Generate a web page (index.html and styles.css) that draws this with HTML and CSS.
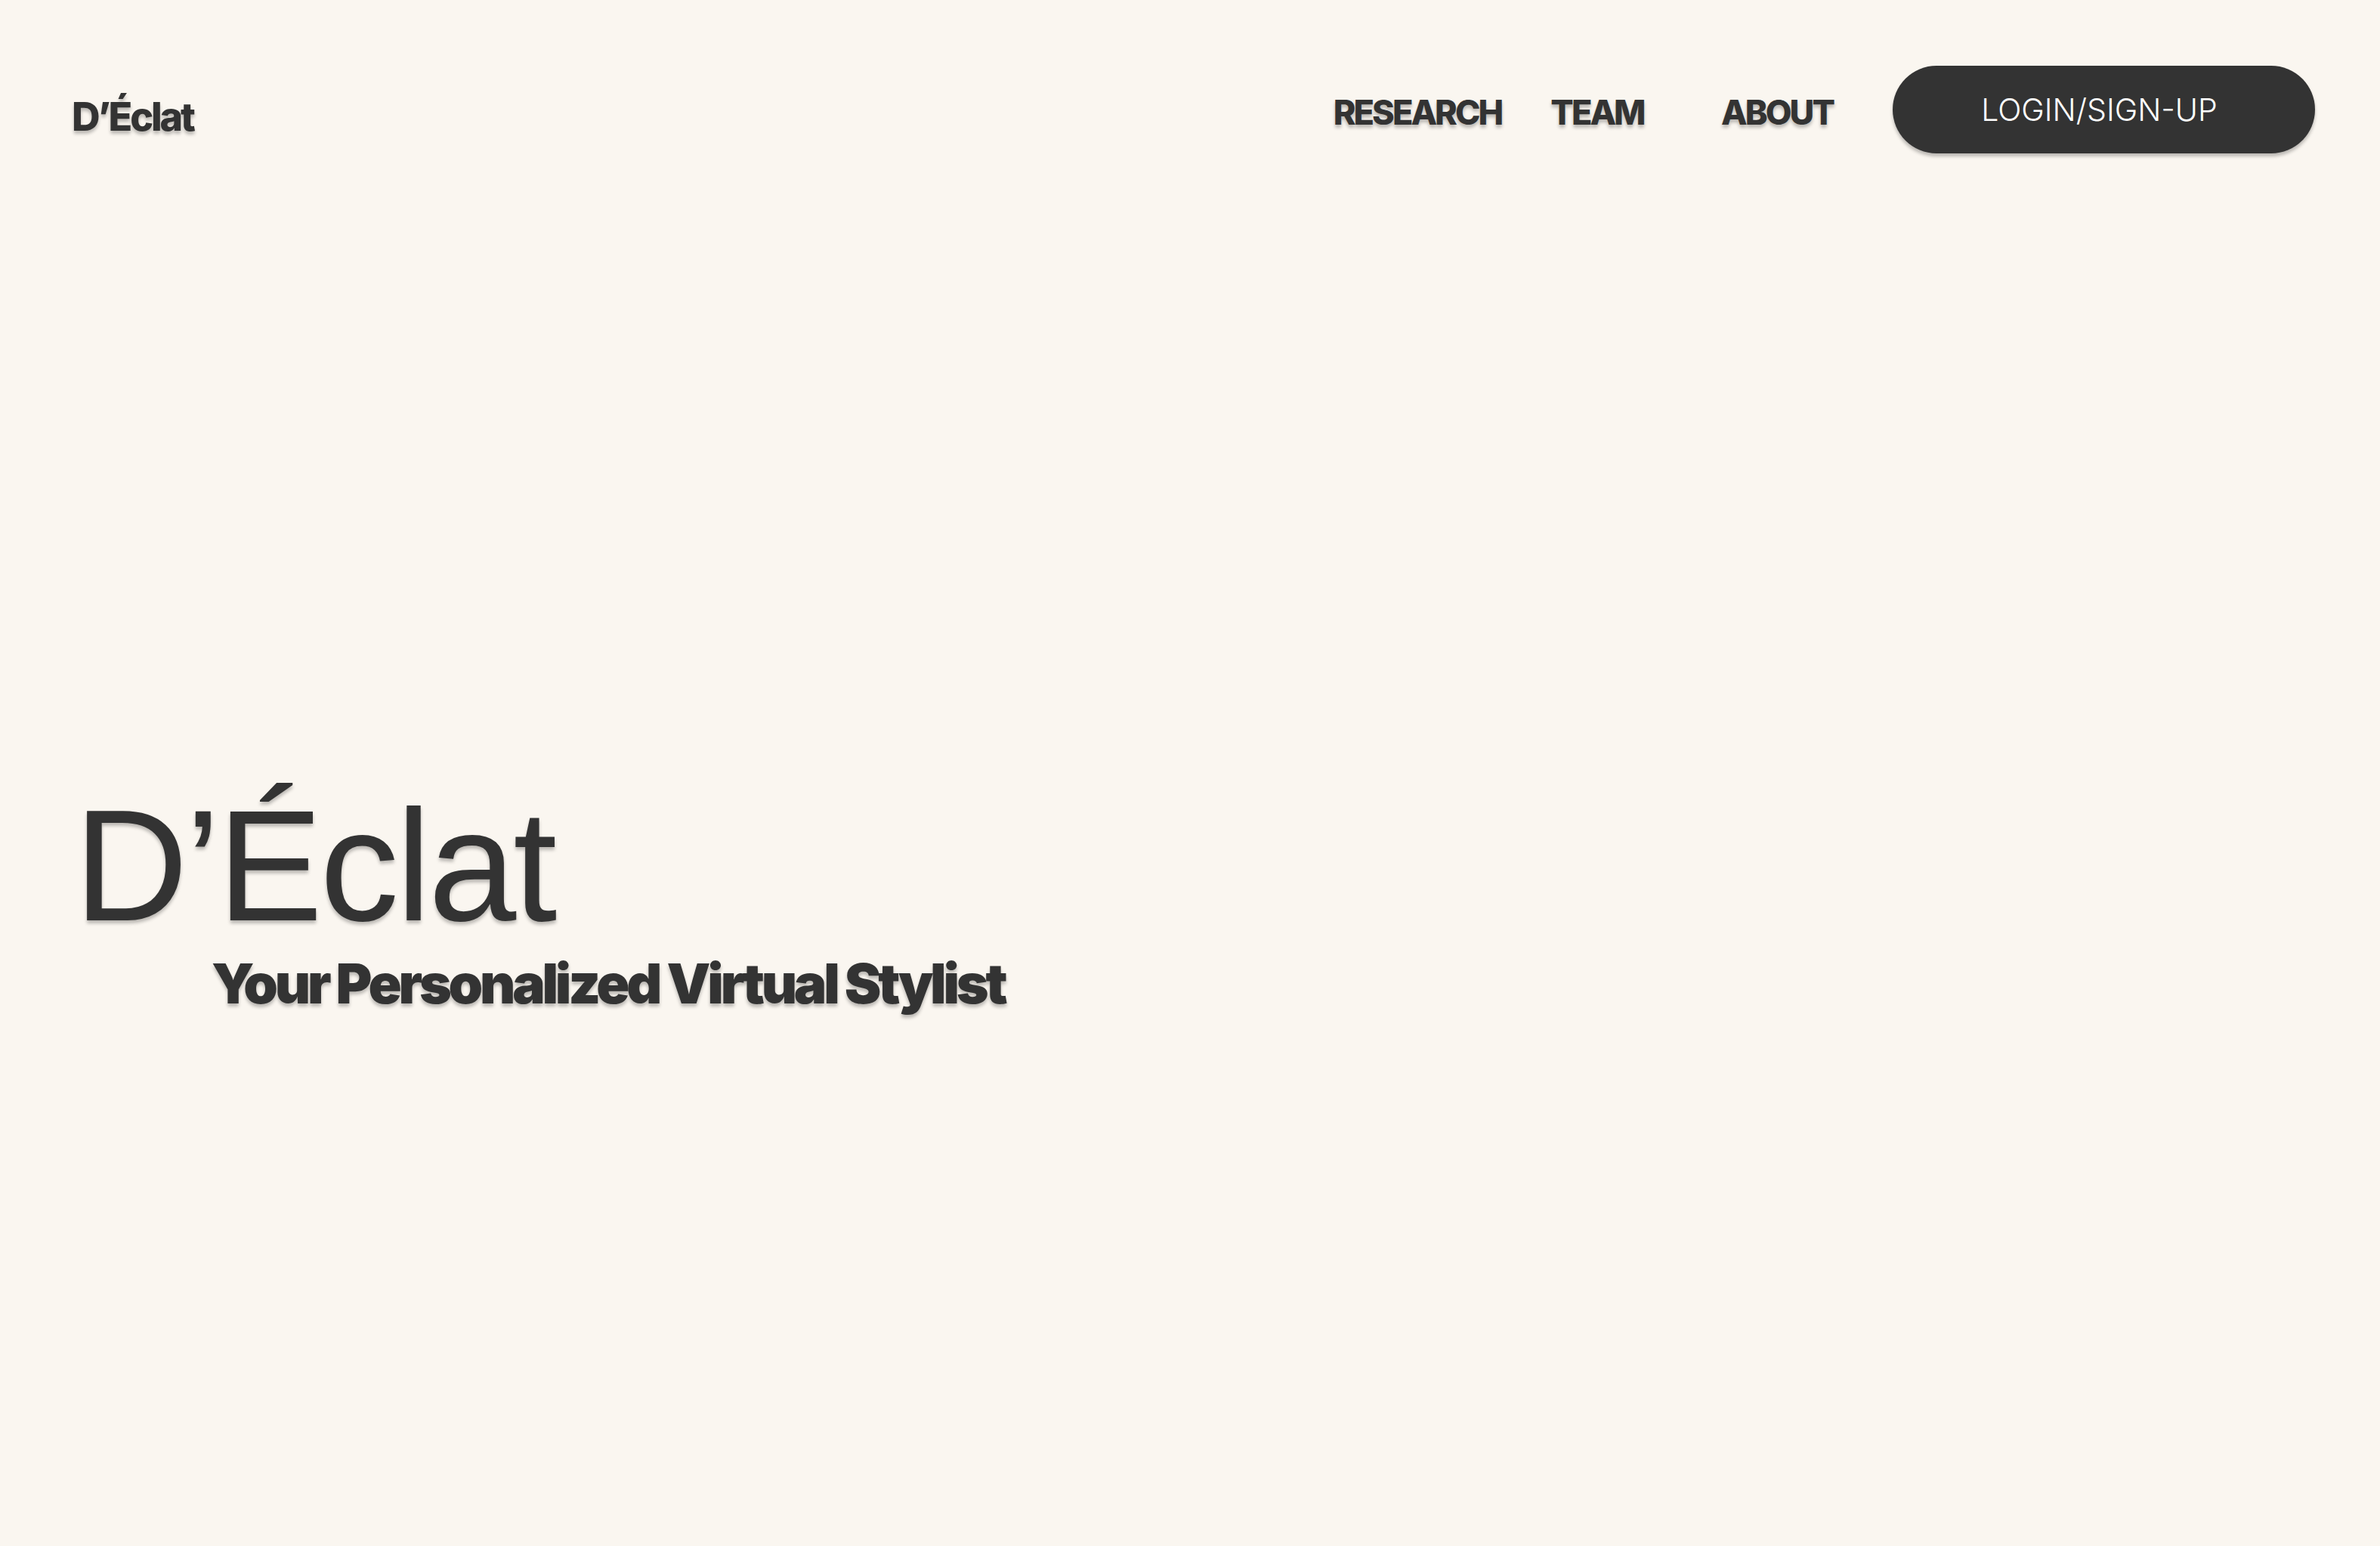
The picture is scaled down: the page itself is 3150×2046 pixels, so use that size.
FILE: index.html
```html
<!DOCTYPE html>
<html lang="en">
<head>
<meta charset="utf-8">
<title>D'Éclat</title>
<link rel="stylesheet" href="styles.css">
</head>
<body>
<header class="topbar">
  <a class="brand" href="#">D’Éclat</a>
  <nav class="nav">
    <a class="nav-link" href="#">RESEARCH</a>
    <a class="nav-link" href="#">TEAM</a>
    <a class="nav-link" href="#">ABOUT</a>
    <a class="login-btn" href="#">LOGIN/SIGN-UP</a>
  </nav>
</header>
<main class="hero">
  <h1 class="hero-title">D’Éclat</h1>
  <p class="hero-sub">Your Personalized Virtual Stylist</p>
</main>
</body>
</html>
```

FILE: styles.css
```css
html, body {
  margin: 0;
  padding: 0;
}
body {
  background: #faf6f0;
  color: #333333;
  font-family: Inter, "Noto Sans", sans-serif;
  width: 3150px;
  height: 2046px;
  overflow: hidden;
}
a {
  color: inherit;
  text-decoration: none;
}
.topbar {
  display: flex;
  justify-content: space-between;
  align-items: center;
  padding: 87px 86px 0 95px;
}
.brand {
  font-size: 52px;
  font-weight: 800;
  letter-spacing: -0.06em;
  text-shadow: 0 4px 4px rgba(0, 0, 0, 0.25);
  margin-top: 18px;
}
.nav {
  display: flex;
  align-items: center;
}
.nav-link {
  width: 238px;
  text-align: center;
  font-size: 45px;
  font-weight: 800;
  letter-spacing: -0.065em;
  text-shadow: 0 4px 4px rgba(0, 0, 0, 0.25);
  margin-top: 6px;
}
.login-btn {
  margin-left: 34px;
  width: 559px;
  height: 116px;
  padding-right: 12px;
  box-sizing: border-box;
  border-radius: 58px;
  background: #333333;
  color: #ffffff;
  display: flex;
  align-items: center;
  justify-content: center;
  font-size: 41px;
  font-weight: 300;
  box-shadow: 0 4px 4px rgba(0, 0, 0, 0.25);
}
.hero {
  padding: 823px 0 0 98px;
}
.hero-title {
  margin: 0;
  font-family: "Liberation Sans", Arial, sans-serif;
  font-size: 209px;
  font-weight: 400;
  line-height: 1.15;
  letter-spacing: -0.018em;
  text-shadow: 0 4px 4px rgba(0, 0, 0, 0.25);
}
.hero-sub {
  margin: -8px 0 0 182px;
  font-size: 73px;
  font-weight: 900;
  letter-spacing: -0.058em;
  line-height: 1.2;
  text-shadow: 0 4px 4px rgba(0, 0, 0, 0.25);
}
```
